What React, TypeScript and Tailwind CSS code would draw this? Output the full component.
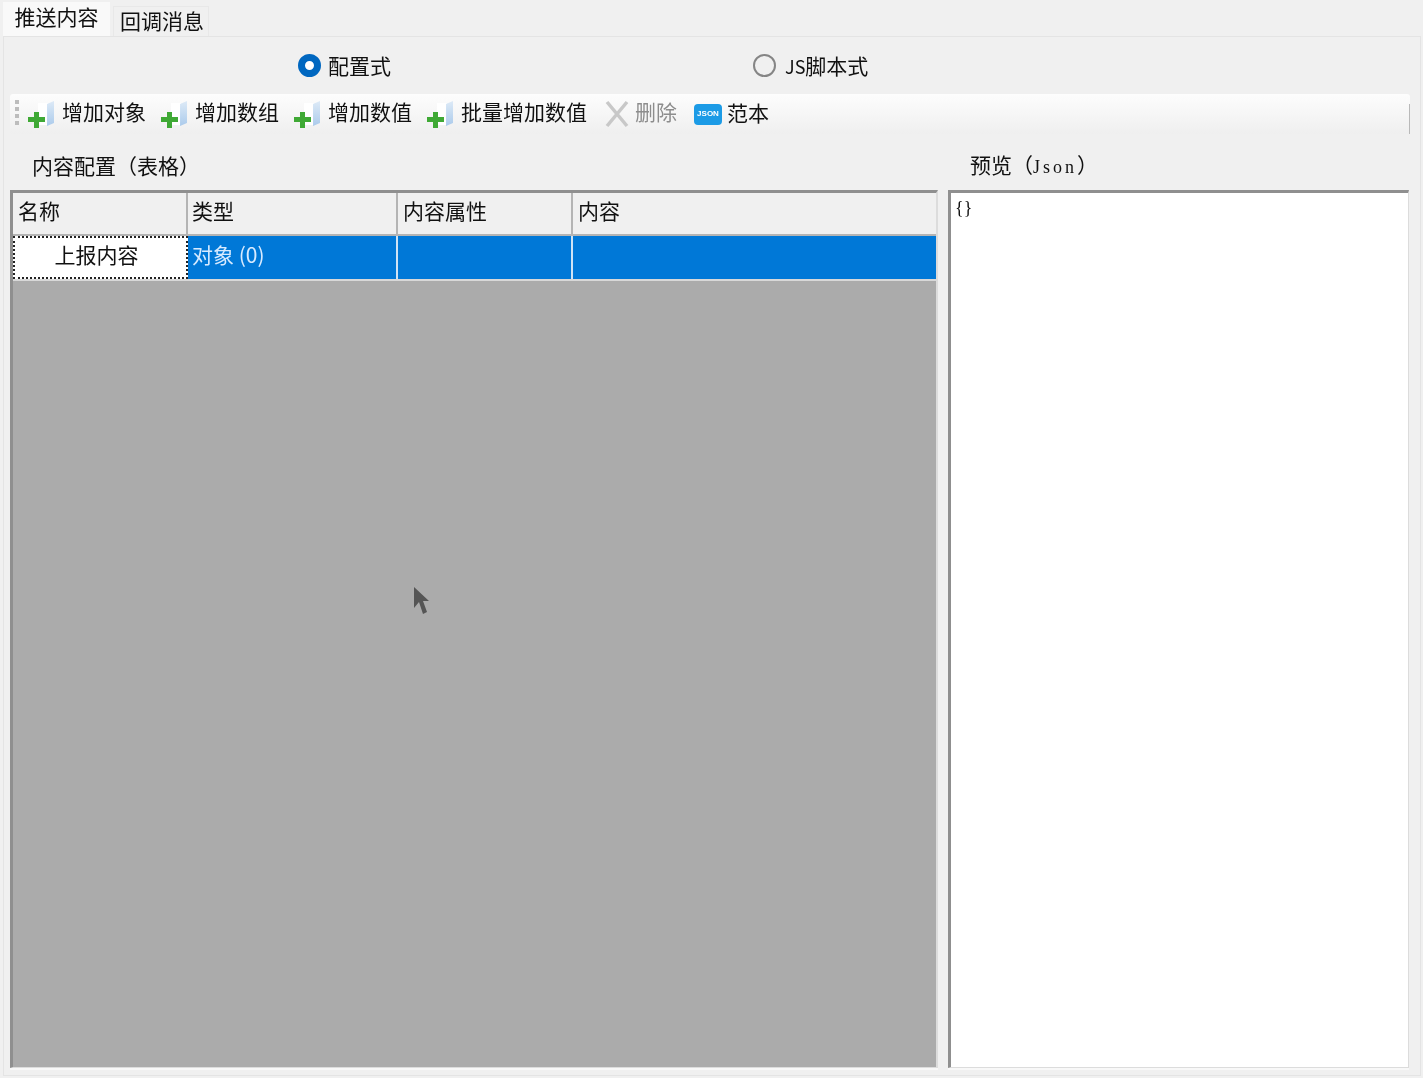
const cjk = "font-['Noto_Sans_CJK_SC',sans-serif]";

function AddIcon() {
  return (
    <svg width="28" height="30" viewBox="0 0 28 30" className="shrink-0">
      <defs>
        <linearGradient id="sheet" x1="0" y1="0" x2="0" y2="1">
          <stop offset="0" stopColor="#d8e7f6" />
          <stop offset="1" stopColor="#9fc4ea" />
        </linearGradient>
      </defs>
      <rect x="11" y="4" width="10" height="22" fill="#ffffff" />
      <path d="M20 5 L27 2 V24 L20 27 Z" fill="url(#sheet)" opacity="0.85" />
      <path d="M7 13 h5 v5 h6 v5 h-6 v6 h-5 v-6 h-6 v-5 h6 z" fill="#3fa935" />
    </svg>
  );
}

function DeleteIcon() {
  return (
    <svg width="28" height="30" viewBox="0 0 28 30" className="shrink-0">
      <path d="M5 3 L25 27 M25 3 L5 27" stroke="#c8c8c8" strokeWidth="3.5" />
    </svg>
  );
}

function JsonIcon() {
  return (
    <span className="flex h-[21px] w-[28px] shrink-0 items-center justify-center rounded-[4px] bg-[#1c9be6] font-['Liberation_Sans',sans-serif] text-[8px] font-bold leading-none text-white">
      JSON
    </span>
  );
}

function ToolButton({ label, className }: { label: string; className: string }) {
  return (
    <div className={`flex items-center ${className}`}>
      <AddIcon />
      <span className="ml-[7px] whitespace-nowrap pb-[5px]">{label}</span>
    </div>
  );
}

function Radio({ checked, children }: { checked?: boolean; children: React.ReactNode }) {
  return (
    <div className="flex items-center">
      {checked ? (
        <span className="h-[23px] w-[23px] rounded-full border-[7px] border-[#0067c0] bg-white" />
      ) : (
        <span className="h-[23px] w-[23px] rounded-full border-2 border-[#858585] bg-[#f0f0f0]" />
      )}
      <span className="ml-[7px] text-[21px] leading-none text-[#111]">{children}</span>
    </div>
  );
}

export default function App() {
  return (
    <div className={`flex h-[1078px] w-[1423px] flex-col overflow-hidden bg-[#f0f0f0] text-[21px] text-[#111] blur-[0.4px] ${cjk}`}>
      {/* Tabs */}
      <div className="flex h-[36px] shrink-0 items-end pl-[3px]">
        <div className="flex h-[34px] w-[107px] items-center justify-center bg-[#f9f9f9] pb-[5px] leading-none">推送内容</div>
        <div className="ml-[3px] flex h-[30px] w-[96px] items-center justify-center bg-[#f0f0f0] pb-[2px] pl-[2px] leading-none shadow-[inset_1px_1px_0_#e8e8e8,inset_-1px_0_0_#e8e8e8]">回调消息</div>
      </div>

      <div className="mb-[2px] ml-[3px] mr-[2px] flex min-h-0 flex-1 flex-col border border-[#e4e4e4] bg-[#f0f0f0] pb-[7px] pl-[6px] pr-[11px]">
        {/* Radios */}
        <div className="flex h-[57px] shrink-0 items-center pb-[1px] pl-[288px]">
          <Radio checked>配置式</Radio>
          <div className="ml-[362px]">
            <Radio>
              <span className="pl-[2px] text-[18px]">JS</span>脚本式
            </Radio>
          </div>
        </div>

        {/* Toolbar */}
        <div className="-mr-[1px] flex h-[40px] shrink-0 items-center rounded-t-[3px] bg-gradient-to-b from-[#fdfdfd] to-[#efefef] text-[21px] leading-none">
          <div className="ml-[5px] flex w-[4px] flex-col gap-[3px] pb-[3px]">
            <span className="h-[4px] w-[4px] bg-[#bdbdbd]" />
            <span className="h-[4px] w-[4px] bg-[#bdbdbd]" />
            <span className="h-[4px] w-[4px] bg-[#bdbdbd]" />
            <span className="h-[4px] w-[4px] bg-[#bdbdbd]" />
          </div>
          <ToolButton label="增加对象" className="ml-[8px]" />
          <ToolButton label="增加数组" className="ml-[14px]" />
          <ToolButton label="增加数值" className="ml-[14px]" />
          <ToolButton label="批量增加数值" className="ml-[14px]" />
          <div className="ml-[15px] flex items-center text-[#8d8d8d]">
            <DeleteIcon />
            <span className="ml-[5px] pb-[5px]">删除</span>
          </div>
          <div className="ml-[17px] flex items-center">
            <JsonIcon />
            <span className="ml-[5px] pb-[3px]">范本</span>
          </div>
          <div className="ml-auto h-[30px] w-[1px] self-end bg-[#b9b9b9]" />
        </div>

        {/* Two panes */}
        <div className="flex min-h-0 flex-1 gap-[10px]">
          <div className="flex w-[928px] shrink-0 flex-col">
            <div className="flex h-[56px] shrink-0 items-center pl-[22px] pt-[6px] leading-none">内容配置（表格）</div>
            <div className="flex min-h-0 flex-1 flex-col border-[3px] border-b-[1px] border-r-[2px] border-[#8f8f8f] border-b-[#dcdcdc] border-r-[#dcdcdc] bg-[#ababab] shadow-[0_2px_0_#f8f8f8]">
              <div className="grid h-[43px] shrink-0 grid-cols-[175px_210px_175px_1fr] border-b-2 border-[#b4b4b4] bg-[#f0f0f0] leading-none">
                <div className="flex items-center border-r-2 border-[#b4b4b4] pb-[7px] pl-[5px]">名称</div>
                <div className="flex items-center border-r-2 border-[#b4b4b4] pb-[7px] pl-[4px]">类型</div>
                <div className="flex items-center border-r-2 border-[#b4b4b4] pb-[7px] pl-[5px]">内容属性</div>
                <div className="flex items-center pb-[7px] pl-[5px]">内容</div>
              </div>
              <div className="grid h-[45px] shrink-0 grid-cols-[175px_210px_175px_1fr] border-b-2 border-[#d8d8d8] bg-[#0078d7] leading-none text-white">
                <div className="flex items-center justify-center border-2 border-dotted border-[#222] bg-white pb-[7px] pr-[8px] text-[#111]">上报内容</div>
                <div className="flex items-center border-r-2 border-[#cfe3f5] pb-[7px] pl-[4px] text-[#d8ebff]">对象 (0)</div>
                <div className="border-r-2 border-[#cfe3f5]" />
                <div />
              </div>
              {/* Cursor over the empty grid area */}
              <div className="relative flex-1">
                <svg width="18" height="28" viewBox="0 0 18 28" className="absolute left-[400px] top-[306px]">
                  <path d="M1 0 V21 L6 15 L10 27 L14 25 L10 14 L16 14 Z" fill="#555555" />
                </svg>
              </div>
            </div>
          </div>

          <div className="flex min-w-0 flex-1 flex-col">
            <div className="flex h-[56px] shrink-0 items-center pl-[22px] pt-[6px] leading-none">
              <span>
                预览（<span className="font-['Liberation_Serif',serif] text-[18px] tracking-[3px]">Json</span>）
              </span>
            </div>
            <div className="min-h-0 flex-1 border-[3px] border-b-[1px] border-r-[1px] border-[#8f8f8f] border-b-[#dcdcdc] border-r-[#dcdcdc] bg-white pl-[4px] pt-[3px] font-['Liberation_Serif',serif] text-[18px] leading-[24px] shadow-[0_2px_0_#f8f8f8]">
              {"{}"}
            </div>
          </div>
        </div>
      </div>
    </div>
  );
}
